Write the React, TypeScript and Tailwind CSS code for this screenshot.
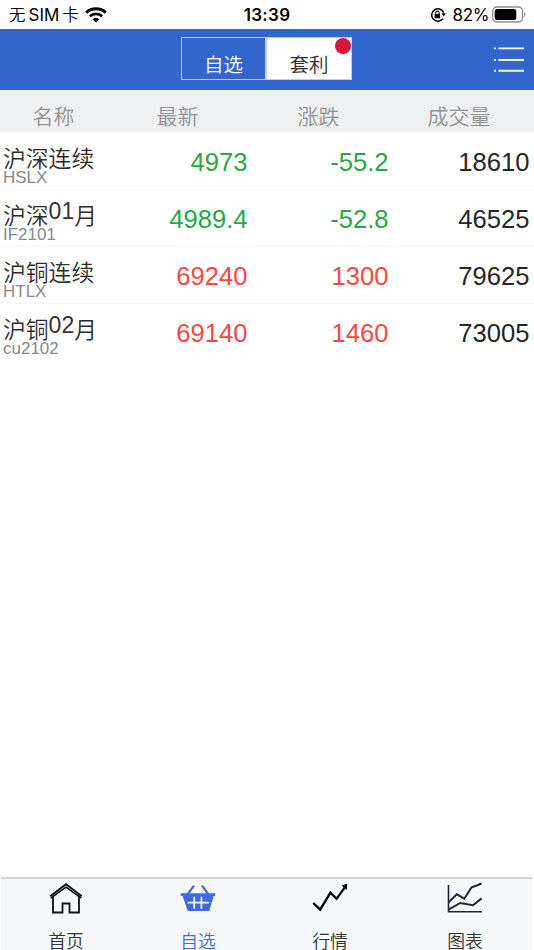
import React, { useState } from 'react';

interface Quote {
  name: React.ReactNode;
  code: string;
  last: string;
  change: string;
  volume: string;
  up: boolean;
}

const quotes: Quote[] = [
  { name: '沪深连续', code: 'HSLX', last: '4973', change: '-55.2', volume: '18610', up: false },
  { name: <>沪深<Digits>01</Digits>月</>, code: 'IF2101', last: '4989.4', change: '-52.8', volume: '46525', up: false },
  { name: '沪铜连续', code: 'HTLX', last: '69240', change: '1300', volume: '79625', up: true },
  { name: <>沪铜<Digits>02</Digits>月</>, code: 'cu2102', last: '69140', change: '1460', volume: '73005', up: true },
];

// month digits sit a little above the chinese baseline
function Digits({ children }: { children: React.ReactNode }) {
  return <span className="relative -top-[5px] font-['Liberation_Sans',sans-serif] text-[23px] text-[#333]">{children}</span>;
}

const StatusBar = () => (
  <div className="flex h-[29px] shrink-0 items-center bg-white text-black">
    <div className="flex w-[178px] items-center pl-[9px]">
      <span className="font-['Inter','Noto_Sans_CJK_SC',sans-serif] text-[16.5px] leading-[28px] whitespace-nowrap">
        <span className="font-[350]">无</span>
        <span className="mx-[3px] text-[17px]">SIM</span>
        <span className="font-[350]">卡</span>
      </span>
      <svg className="ml-[6px]" width="22" height="16" viewBox="0 0 22 16" fill="none" stroke="black">
        <path d="M1.2 5.6C6.8.5 15.2.5 20.8 5.6" strokeWidth="3" />
        <path d="M4.8 9.2C8.4 6 13.6 6 17.2 9.2" strokeWidth="2.8" />
        <path d="M11 15.6 7.6 12.2C9.5 10.6 12.5 10.6 14.4 12.2Z" fill="black" stroke="none" />
      </svg>
    </div>
    <div className="flex-1 pt-[2px] text-center font-['Inter',sans-serif] text-[17px] font-semibold tracking-[0.3px]">13:39</div>
    <div className="flex w-[178px] items-center justify-end pr-[8px]">
      <svg width="16" height="16" viewBox="0 0 16 16" fill="none" stroke="black">
        <path d="M12.9 11.6A6.2 6.2 0 1 1 13.6 5.6" strokeWidth="1.5" />
        <path d="M11.6 6.2h4.2l-2 3.2z" fill="black" stroke="none" />
        <rect x="4.6" y="7.1" width="5.6" height="4.2" rx=".6" fill="black" stroke="none" />
        <path d="M5.7 7.2V5.8a1.7 1.7 0 0 1 3.4 0v1.4" strokeWidth="1.1" />
      </svg>
      <span className="ml-[7px] pt-[2px] font-['Inter',sans-serif] text-[17px] tracking-[-0.4px]">82%</span>
      <svg className="ml-[3px]" width="34" height="17" viewBox="0 0 34 17">
        <rect x=".7" y="1" width="30" height="15" rx="4.4" fill="none" stroke="#8e8e8e" strokeWidth="1.3" />
        <rect x="2.7" y="3" width="21.6" height="11" rx="2.5" fill="black" />
        <path d="M32.2 6.2c1.6.6 1.6 4 0 4.6z" fill="#8e8e8e" />
      </svg>
    </div>
  </div>
);

const HomeIcon = () => (
  <svg className="shrink-0" width="36" height="34" viewBox="0 0 36 34" fill="none" stroke="#111" strokeWidth="1.8">
    <path d="M2.2 15.2 18 3.2 33.8 15.2" strokeWidth="2" />
    <path d="M2.8 17 18 6.2 33.2 17" strokeWidth="1.6" />
    <path d="M5 15.5V31.5h9.5V22.5h7V31.5H31V15.5" />
  </svg>
);

const BasketIcon = () => (
  <svg className="shrink-0" width="36" height="34" viewBox="0 0 36 34" fill="none">
    <path d="M7.5 13.5 14 4.7M28.5 13.5 22 4.7" stroke="#4169e1" strokeWidth="2.2" />
    <path d="M.8 12.2h34.4v2.8h-1.6L29.2 30H7.8L2.6 15H.8z" fill="#4169e1" />
    <path d="M7.5 21.6h21.5M14.2 15.8v12M21.4 15.8v12" stroke="#f7f8fa" strokeWidth="1.7" />
  </svg>
);

const TrendIcon = () => (
  <svg className="shrink-0" width="36" height="34" viewBox="0 0 36 34" fill="none" stroke="black" strokeWidth="2.3">
    <path d="M1.2 22 8.2 28.6 18.4 11.6 24.6 17.8 33 6.2" />
    <path d="M29.6 4.6 35.2 2.8 34.8 9z" fill="black" stroke="none" />
  </svg>
);

const ChartIcon = () => (
  <svg className="shrink-0" width="36" height="34" viewBox="0 0 36 34" fill="none" stroke="#25253a" strokeWidth="2">
    <path d="M1.5 4V30.8H35" strokeWidth="1.6" />
    <path d="M1.5 21.5 9.8 13.3 17.3 17.7 24.3 6.6 34.6 2.5" />
    <path d="M1.5 28.6 13.2 22 26 24.2 34.6 17.4" />
  </svg>
);

const tabs = [
  { label: '首页', icon: <HomeIcon /> },
  { label: '自选', icon: <BasketIcon /> },
  { label: '行情', icon: <TrendIcon /> },
  { label: '图表', icon: <ChartIcon /> },
];

const App: React.FC = () => {
  const [tab, setTab] = useState(1);

  return (
    <div className="flex h-[950px] w-[534px] flex-col overflow-hidden bg-white font-['Noto_Sans_CJK_SC',sans-serif]">
      <StatusBar />

      <header className="flex h-[61px] shrink-0 items-start bg-[#3366cc] pt-[8px]">
        <div className="ml-[181px] flex h-[43px] w-[171px] text-[19.5px] font-[350]">
          <button className="w-[85px] border border-[#c8cdd8] pt-[9px] leading-[33px] text-white">自选</button>
          <button className="relative w-[86px] border border-[#c8cdd8] bg-white pt-[9px] leading-[33px] text-[#2c2c2c]">
            套利
            <span className="absolute top-0 right-0 size-4 rounded-full bg-[#dc143c]" />
          </button>
        </div>
        <button className="mt-[9px] ml-[142px]">
          <svg width="30" height="27" viewBox="0 0 30 27" stroke="#f3f6fc" strokeWidth="1.9">
            <path d="M0 2.4h2M4.4 2.4H30M0 14h2M4.4 14H30M0 24.8h2M4.4 24.8H30" />
          </svg>
        </button>
      </header>

      <div className="flex h-[42px] shrink-0 bg-[#eff0f2] pt-[4px] text-[21px] leading-[42px] font-[350] text-[#929292]">
        <span className="w-[107px] text-center">名称</span>
        <span className="w-[141px] text-center">最新</span>
        <span className="w-[141px] text-center">涨跌</span>
        <span className="w-[140px] text-center">成交量</span>
      </div>

      <main className="flex-1 pt-px">
        {quotes.map(q => (
          <div key={q.code} className="flex h-[57px] border-b border-[#f6f6f6] font-['Liberation_Sans',sans-serif] last:border-b-0">
            <div className="w-[107.5px] pt-[11px] pl-[3px]">
              <div className="h-[25px] font-['Noto_Sans_CJK_SC',sans-serif] text-[22.8px] leading-[27px] font-[350] whitespace-nowrap text-[#2c2c2c]">{q.name}</div>
              <div className="text-[17px] leading-[17px] text-[#888]">{q.code}</div>
            </div>
            <div className={`flex text-right text-[25.6px] leading-[59px] ${q.up ? 'text-[#ff4545]' : 'text-[#28a745]'}`}>
              <span className="w-[140px]">{q.last}</span>
              <span className="w-[141px]">{q.change}</span>
              <span className="w-[141px] text-[#262626]">{q.volume}</span>
            </div>
          </div>
        ))}
      </main>

      <nav className="mr-[2px] ml-px flex h-[73px] shrink-0 border-t-2 border-[#d2d2d2] bg-[#f7f8fa]">
        {tabs.map((t, i) => (
          <button
            key={t.label}
            onClick={() => setTab(i)}
            className={`flex w-[132px] flex-col items-center pt-[2px] pr-[2px] text-[17.8px] font-[350] last:w-[135px] last:pr-0 last:pl-px ${i === tab ? 'text-[#4169e1]' : 'text-[#333]'}`}
          >
            {t.icon}
            <span className="mt-[13px] leading-[24px]">{t.label}</span>
          </button>
        ))}
      </nav>
    </div>
  );
};

export default App;
